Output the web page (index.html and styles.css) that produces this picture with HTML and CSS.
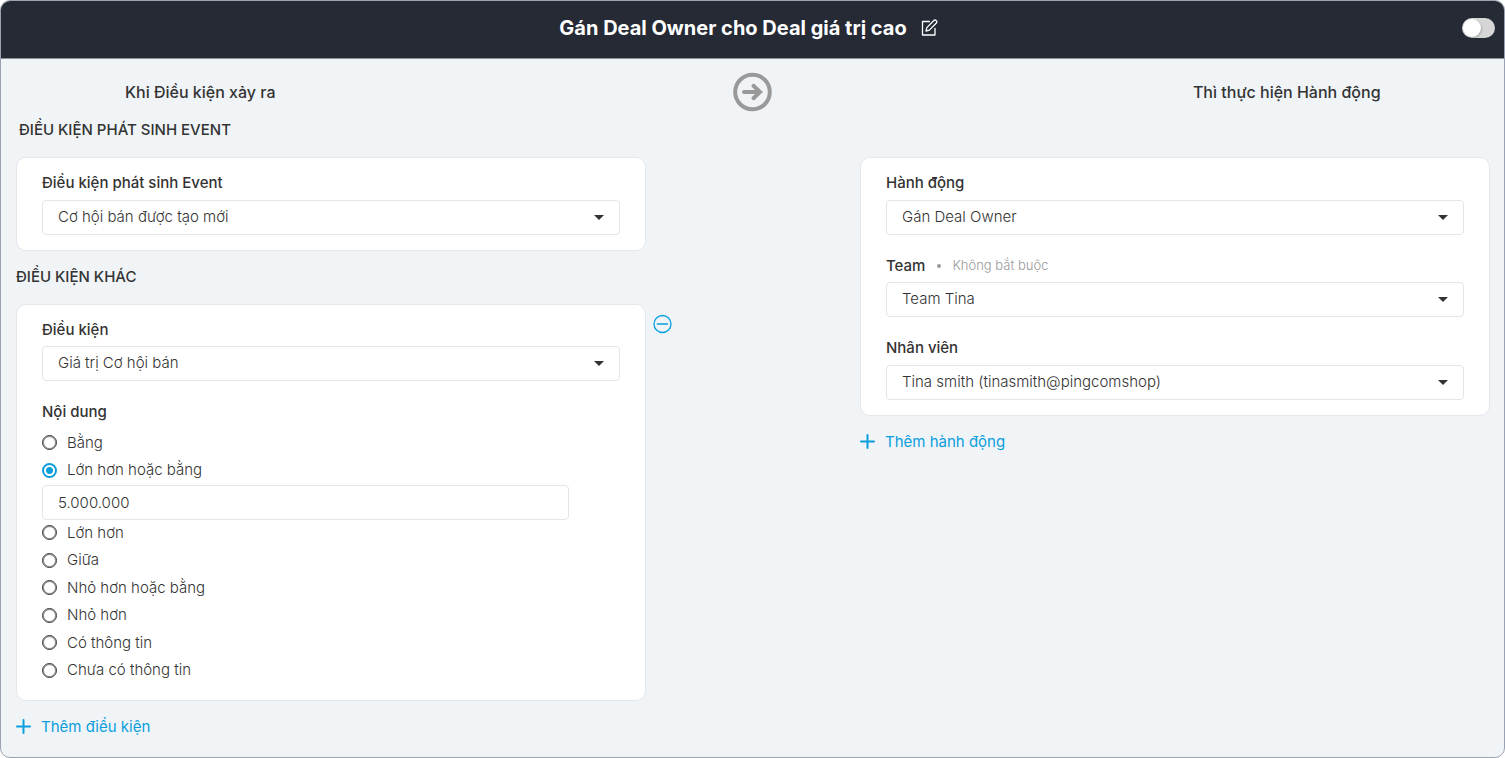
FILE: index.html
```html
<!DOCTYPE html>
<html lang="vi">
<head>
<meta charset="utf-8">
<title>Gán Deal Owner cho Deal giá trị cao</title>
<link rel="stylesheet" href="styles.css">
</head>
<body>
<main class="workflow">
  <header class="topbar">
    <div class="topbar-title">
      <h1>Gán Deal Owner cho Deal giá trị cao</h1>
      <button class="icon-button" type="button" aria-label="Sửa tên">
        <svg width="17" height="17" viewBox="0 0 17 17" fill="none" stroke="currentColor" stroke-width="1.3" stroke-linejoin="round" stroke-linecap="round">
          <path d="M8.500 2.500H1.500v13.500h12.500V9.500"/>
          <path d="M5 12l.8-3.400L12.900 1.500a1.500 1.500 0 0 1 2.200 0l.3.3a1.500 1.500 0 0 1 0 2.200L8.300 11.100 5 12z"/>
        </svg>
      </button>
    </div>
    <input class="switch" type="checkbox" role="switch" aria-label="Kích hoạt">
  </header>

  <div class="content">
    <div class="headline">
      <h2>Khi Điều kiện xảy ra</h2>
      <svg class="arrow" width="40" height="40" viewBox="0 0 40 40" fill="none" stroke="currentColor" stroke-width="4">
        <circle cx="19.500" cy="20" r="17.300"/>
        <path d="M11 20h16M20.500 13.800l6.500 6.200-6.500 6.200" stroke-linecap="round"/>
      </svg>
      <h2 class="headline-action">Thì thực hiện Hành động</h2>
    </div>

    <div class="columns">
      <section class="column">
        <h3 class="section-title section-title-first">ĐIỀU KIỆN PHÁT SINH EVENT</h3>
        <div class="card">
          <div class="field">
            <label for="event">Điều kiện phát sinh Event</label>
            <select id="event" class="control"><option>Cơ hội bán được tạo mới</option></select>
          </div>
        </div>

        <h3 class="section-title">ĐIỀU KIỆN KHÁC</h3>
        <div class="condition">
          <div class="card">
            <div class="field">
              <label for="condition">Điều kiện</label>
              <select id="condition" class="control"><option>Giá trị Cơ hội bán</option></select>
            </div>
            <fieldset class="options">
              <legend>Nội dung</legend>
              <label class="option"><input type="radio" name="op">Bằng</label>
              <label class="option"><input type="radio" name="op" checked>Lớn hơn hoặc bằng</label>
              <input class="control amount" type="text" value="5.000.000" aria-label="Giá trị">
              <label class="option"><input type="radio" name="op">Lớn hơn</label>
              <label class="option"><input type="radio" name="op">Giữa</label>
              <label class="option"><input type="radio" name="op">Nhỏ hơn hoặc bằng</label>
              <label class="option"><input type="radio" name="op">Nhỏ hơn</label>
              <label class="option"><input type="radio" name="op">Có thông tin</label>
              <label class="option"><input type="radio" name="op">Chưa có thông tin</label>
            </fieldset>
          </div>
          <button class="remove" type="button" aria-label="Xóa điều kiện">
            <svg width="20" height="20" viewBox="0 0 20 20" fill="none" stroke="currentColor" stroke-width="1.300">
              <circle cx="9.500" cy="10" r="8.500"/>
              <path d="M4.500 10h10" stroke-width="1.600" stroke-linecap="round"/>
            </svg>
          </button>
        </div>
        <button class="add" type="button">
          <svg width="15" height="15" viewBox="0 0 15 15" fill="none" stroke="currentColor" stroke-width="2" stroke-linecap="round"><path d="M1 7.500h13M7.500 1v13"/></svg>
          Thêm điều kiện
        </button>
      </section>

      <section class="column column-action">
        <div class="card">
          <div class="field">
            <label for="action">Hành động</label>
            <select id="action" class="control"><option>Gán Deal Owner</option></select>
          </div>
          <div class="field">
            <label for="team">Team <span class="dot"></span><span class="optional">Không bắt buộc</span></label>
            <select id="team" class="control"><option>Team Tina</option></select>
          </div>
          <div class="field">
            <label for="staff">Nhân viên</label>
            <select id="staff" class="control"><option>Tina smith (tinasmith@pingcomshop)</option></select>
          </div>
        </div>
        <button class="add" type="button">
          <svg width="15" height="15" viewBox="0 0 15 15" fill="none" stroke="currentColor" stroke-width="2" stroke-linecap="round"><path d="M1 7.500h13M7.500 1v13"/></svg>
          Thêm hành động
        </button>
      </section>
    </div>
  </div>
</main>
</body>
</html>
```
FILE: styles.css
```css
* {
  box-sizing: border-box;
}

body {
  margin: 0;
  background: #fff;
  color: #333;
  font: 300 15px/1.5 Inter, "Noto Sans", sans-serif;
}

h1,
h2,
h3 {
  margin: 0;
}

button,
input,
select {
  font: inherit;
  color: inherit;
}

button {
  border: 0;
  padding: 0;
  background: none;
  cursor: pointer;
}

svg {
  display: block;
}

.workflow {
  display: flex;
  flex-direction: column;
  min-height: 100vh;
  overflow: hidden;
  border: 1px solid #9aa2b1;
  border-radius: 10px;
  background: #f0f4f7;
}

.topbar {
  display: grid;
  grid-template-columns: 1fr auto 1fr;
  align-items: center;
  height: 58px;
  padding: 0 9px 4px 1px;
  border-bottom: 1px solid #8c8f94;
  background: #252a35;
  color: #fff;
}

.topbar-title {
  grid-column: 2;
  display: flex;
  align-items: center;
  gap: 14px;
}

.topbar-title h1 {
  font-size: 20px;
  font-weight: 700;
  line-height: 30px;
}

.switch {
  appearance: none;
  justify-self: end;
  display: flex;
  width: 33px;
  height: 20px;
  margin: 0;
  padding: 1px;
  border-radius: 10px;
  background: #d6d6d6;
  cursor: pointer;
}

.switch::before {
  content: "";
  width: 18px;
  height: 18px;
  border-radius: 50%;
  background: #fff;
  box-shadow: 1px 1px 2px rgba(0, 0, 0, 0.2);
}

.switch:checked {
  justify-content: flex-end;
  background: #0a9edc;
}

.content {
  flex: 1;
  padding: 13px 14px 16px 15px;
}

.headline {
  display: grid;
  grid-template-columns: 1fr 2fr 1fr;
  align-items: center;
  justify-items: center;
}

.headline h2 {
  font-size: 16px;
  font-weight: 500;
}

.headline-action {
  padding-right: 38px;
}

.arrow {
  color: #999;
}

.columns {
  display: grid;
  grid-template-columns: 1fr 1fr;
  gap: 214px;
}

.section-title {
  font-size: 15px;
  font-weight: 500;
  line-height: 22px;
  margin: 15px 0 16px;
}

.section-title-first {
  margin-top: 7px;
  padding-left: 3px;
}

.column-action {
  padding-top: 45px;
}

.card {
  display: flex;
  flex-direction: column;
  gap: 20px;
  padding: 14px 25px 15px;
  border: 1px solid #e4e7ec;
  border-radius: 10px;
  background: #fff;
}

.field {
  display: flex;
  flex-direction: column;
  gap: 5px;
}

.field > label,
.options legend {
  display: flex;
  align-items: center;
  font-weight: 500;
}

.dot {
  width: 4px;
  height: 4px;
  margin: 0 11px 0 12px;
  border-radius: 50%;
  background: #999;
}

.optional {
  color: #999;
  font-size: 13px;
  font-weight: 300;
}

.control {
  appearance: none;
  width: 100%;
  height: 35px;
  padding: 0 15px;
  border: 1px solid #e4e4ea;
  border-radius: 4px;
  background: #fff;
}

select.control {
  background-image: url("data:image/svg+xml,%3Csvg xmlns='http://www.w3.org/2000/svg' width='10' height='5'%3E%3Cpath d='M0 0h10L5 5z' fill='%23333'/%3E%3C/svg%3E");
  background-repeat: no-repeat;
  background-position: right 15px center;
}

.condition {
  position: relative;
}

.remove {
  position: absolute;
  top: 10px;
  left: calc(100% + 7px);
  color: #0a9edc;
}

.options {
  min-width: 0;
  margin: 0;
  padding: 0;
  border: 0;
}

.options legend {
  padding: 0 0 8px;
}

.option {
  display: flex;
  align-items: center;
  gap: 10px;
  margin-bottom: 5px;
}

.option:last-child {
  margin-bottom: 3px;
}

.option input {
  appearance: none;
  width: 15px;
  height: 15px;
  margin: 0;
  border: 1px solid #333;
  border-radius: 50%;
  box-shadow: inset 0 0 0 1px #888;
}

.option input:checked {
  border: 2px solid #0a9edc;
  background: radial-gradient(circle, #0a9edc 0 3px, #fff 4px);
  box-shadow: none;
}

.amount {
  display: block;
  width: calc(100% - 51px);
  margin: -2px 0 2px;
}

.add {
  display: flex;
  align-items: center;
  gap: 10px;
  margin-top: 15px;
  color: #0a9edc;
  font-weight: 400;
}
```
